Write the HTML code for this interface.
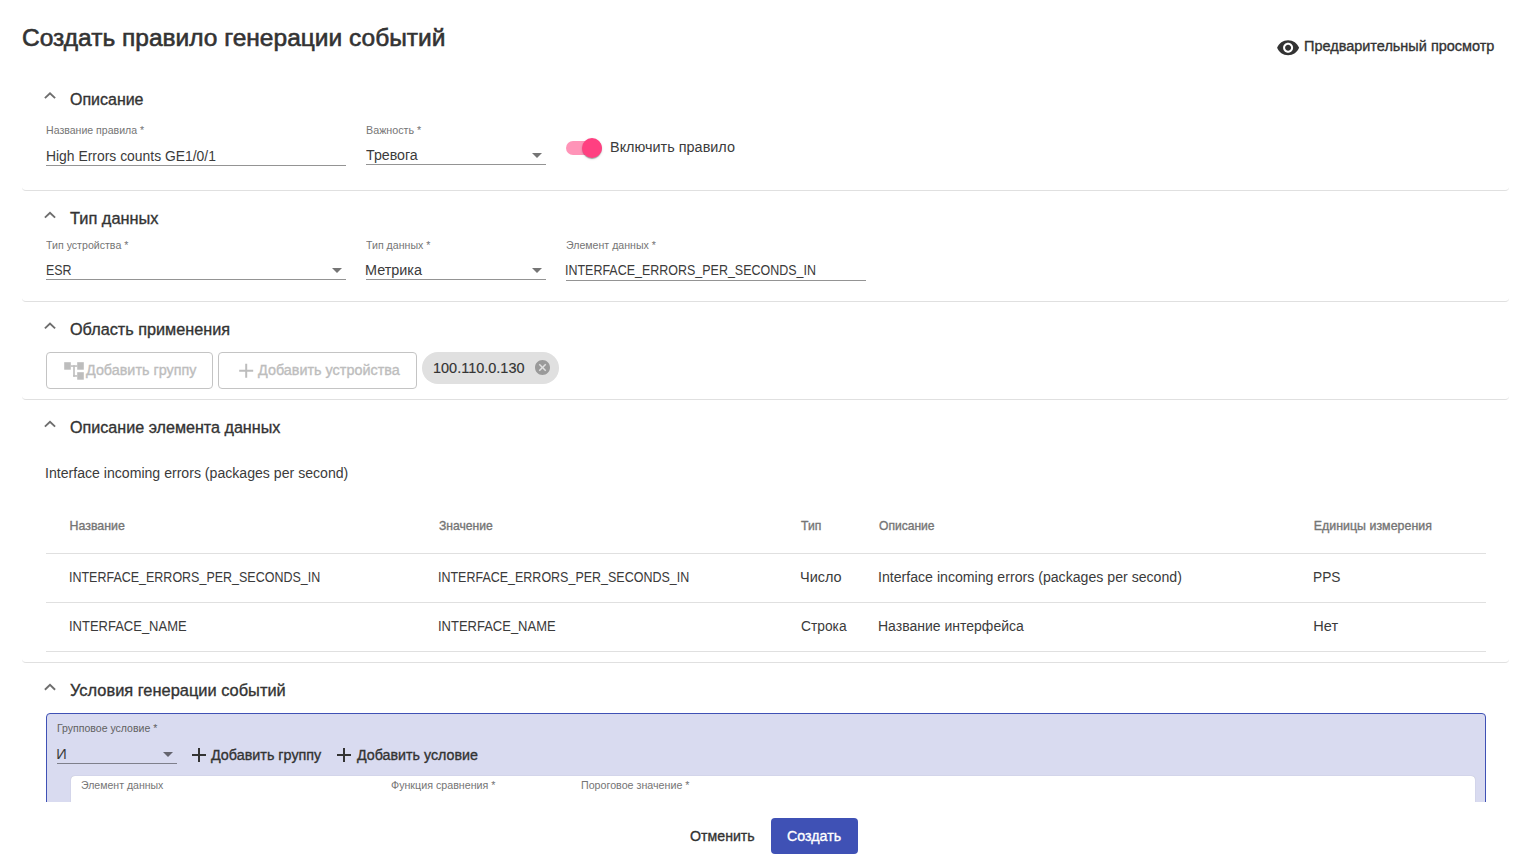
<!DOCTYPE html>
<html><head><meta charset="utf-8"><style>
html,body{margin:0;padding:0;background:#fff;width:1532px;height:868px;overflow:hidden;position:relative}
.t{position:absolute;white-space:nowrap;line-height:1;transform-origin:0 0;font-family:"Liberation Sans",sans-serif}
.r{position:absolute}
.clip{position:absolute;left:0;top:0;width:1532px;height:802px;overflow:hidden}
.ic{position:absolute;left:0;top:0}
</style></head><body>
<div class="r" style="left:22px;top:70px;width:1487px;height:121px;border-bottom:1px solid #e0e0e0;border-radius:4px;box-sizing:border-box"></div><div class="r" style="left:22px;top:198px;width:1487px;height:104px;border-bottom:1px solid #e0e0e0;border-radius:4px;box-sizing:border-box"></div><div class="r" style="left:22px;top:309px;width:1487px;height:91px;border-bottom:1px solid #e0e0e0;border-radius:4px;box-sizing:border-box"></div><div class="r" style="left:22px;top:407px;width:1487px;height:256px;border-bottom:1px solid #e0e0e0;border-radius:4px;box-sizing:border-box"></div><div class="clip"><div class="r" style="left:46px;top:713px;width:1440px;height:117px;background:#d9dbf0;border:1px solid #3f51b5;border-radius:4px;box-sizing:border-box"></div><div class="r" style="left:71px;top:776px;width:1404px;height:54px;background:#fff;border-radius:4px;box-shadow:0 0 1px rgba(0,0,0,.25)"></div></div><div class="r" style="left:46px;top:165px;width:300px;height:1px;background:rgba(0,0,0,.42)"></div><div class="r" style="left:366px;top:164px;width:180px;height:1px;background:rgba(0,0,0,.42)"></div><div class="r" style="left:46px;top:279px;width:300px;height:1px;background:rgba(0,0,0,.42)"></div><div class="r" style="left:366px;top:279px;width:180px;height:1px;background:rgba(0,0,0,.42)"></div><div class="r" style="left:566px;top:280px;width:300px;height:1px;background:rgba(0,0,0,.42)"></div><div class="r" style="left:57px;top:763px;width:120px;height:1px;background:rgba(0,0,0,.42)"></div><div class="r" style="left:46px;top:553px;width:1440px;height:1px;background:#e0e0e0"></div><div class="r" style="left:46px;top:602px;width:1440px;height:1px;background:#e0e0e0"></div><div class="r" style="left:46px;top:651px;width:1440px;height:1px;background:#e0e0e0"></div><div class="r" style="left:566px;top:141px;width:36px;height:14px;background:#ff94b8;border-radius:7px"></div><div class="r" style="left:582px;top:138px;width:20px;height:20px;background:#ff4081;border-radius:50%;box-shadow:0 2px 1px -1px rgba(0,0,0,.2),0 1px 1px 0 rgba(0,0,0,.14),0 1px 3px 0 rgba(0,0,0,.12)"></div><div class="r" style="left:46px;top:352px;width:167px;height:37px;border:1px solid #c4c4c4;border-radius:4px;box-sizing:border-box"></div><div class="r" style="left:218px;top:352px;width:199px;height:37px;border:1px solid #c4c4c4;border-radius:4px;box-sizing:border-box"></div><div class="r" style="left:422px;top:352px;width:137px;height:32px;background:#e0e0e0;border-radius:16px"></div><div class="r" style="left:771px;top:818px;width:87px;height:36px;background:#3f51b5;border-radius:4px"></div>

<svg class="ic" width="1532" height="868" viewBox="0 0 1532 868">
<polyline points="44.9,98.1 50,93.2 55.1,98.1" fill="none" stroke="#6e6e6e" stroke-width="1.9"/><polyline points="44.9,217.6 50,212.7 55.1,217.6" fill="none" stroke="#6e6e6e" stroke-width="1.9"/><polyline points="44.9,328.40000000000003 50,323.5 55.1,328.40000000000003" fill="none" stroke="#6e6e6e" stroke-width="1.9"/><polyline points="44.9,426.6 50,421.7 55.1,426.6" fill="none" stroke="#6e6e6e" stroke-width="1.9"/><polyline points="44.9,689.8000000000001 50,684.9000000000001 55.1,689.8000000000001" fill="none" stroke="#6e6e6e" stroke-width="1.9"/><polygon points="532,153 542,153 537,158" fill="rgba(0,0,0,.54)"/><polygon points="332,268 342,268 337,273" fill="rgba(0,0,0,.54)"/><polygon points="532,268 542,268 537,273" fill="rgba(0,0,0,.54)"/><polygon points="163,752 173,752 168,757" fill="rgba(0,0,0,.54)"/>
<g transform="translate(1276.1,35.8)" fill="#333"><path d="M12 4.5C7 4.5 2.730 7.610 1 12c1.730 4.390 6 7.500 11 7.500s9.270-3.110 11-7.500c-1.730-4.390-6-7.500-11-7.500zM12 17c-2.760 0-5-2.240-5-5s2.240-5 5-5 5 2.240 5 5-2.240 5-5 5zm0-8c-1.660 0-3 1.340-3 3s1.340 3 3 3 3-1.340 3-3-1.340-3-3-3z"/></g>
<g fill="#bdbdbd"><rect x="64.2" y="362.2" width="6.6" height="7.5"/><rect x="77.2" y="362.2" width="6.6" height="7.5"/><rect x="77.2" y="372.2" width="6.6" height="7.5"/><rect x="70.8" y="365.3" width="6.4" height="1.5"/><rect x="73.2" y="365.3" width="1.6" height="11.4"/><rect x="73.2" y="375.2" width="4" height="1.5"/></g>
<g transform="translate(234.2,358.8)" fill="#bdbdbd"><path d="M19 13h-6v6h-2v-6H5v-2h6V5h2v6h6v2z"/></g>
<g transform="translate(533.5,358.5) scale(0.75)" fill="#9a9a9a"><path d="M12 2C6.470 2 2 6.470 2 12s4.470 10 10 10 10-4.470 10-10S17.530 2 12 2zm5 13.590L15.590 17 12 13.410 8.410 17 7 15.590 10.590 12 7 8.410 8.410 7 12 10.590 15.590 7 17 8.410 13.410 12 17 15.590z"/></g>
<g transform="translate(187,743)" fill="#333"><path d="M19 13h-6v6h-2v-6H5v-2h6V5h2v6h6v2z"/></g>
<g transform="translate(332,743)" fill="#333"><path d="M19 13h-6v6h-2v-6H5v-2h6V5h2v6h6v2z"/></g>
</svg>
<div class="t" style="left:21.81px;top:26.00px;font-size:24.73px;color:#333;transform:scaleX(0.9919);-webkit-text-stroke:0.6px #333">Создать правило генерации событий</div><div class="t" style="left:1303.62px;top:39.00px;font-size:14.84px;color:#333;transform:scaleX(0.9762);-webkit-text-stroke:0.35px #333">Предварительный просмотр</div><div class="t" style="left:70.40px;top:92.00px;font-size:16.58px;color:#333;transform:scaleX(0.9637);-webkit-text-stroke:0.35px #333">Описание</div><div class="t" style="left:46.30px;top:125.00px;font-size:10.91px;color:#757575;transform:scaleX(0.9682)">Название правила *</div><div class="t" style="left:45.94px;top:149.00px;font-size:14.55px;color:#3b3b3b;transform:scaleX(0.9554)">High Errors counts GE1/0/1</div><div class="t" style="left:366.30px;top:125.00px;font-size:10.91px;color:#757575;transform:scaleX(0.9844)">Важность *</div><div class="t" style="left:366.30px;top:148.00px;font-size:14.55px;color:#3b3b3b;transform:scaleX(0.9761)">Тревога</div><div class="t" style="left:609.81px;top:140.00px;font-size:14.55px;color:#3b3b3b;transform:scaleX(0.9923)">Включить правило</div><div class="t" style="left:70.30px;top:211.00px;font-size:16.58px;color:#333;transform:scaleX(0.9872);-webkit-text-stroke:0.35px #333">Тип данных</div><div class="t" style="left:46.30px;top:240.00px;font-size:10.91px;color:#757575;transform:scaleX(0.9727)">Тип устройства *</div><div class="t" style="left:45.94px;top:263.00px;font-size:14.55px;color:#3b3b3b;transform:scaleX(0.8555)">ESR</div><div class="t" style="left:366.40px;top:240.00px;font-size:10.91px;color:#757575;transform:scaleX(0.9715)">Тип данных *</div><div class="t" style="left:365.41px;top:263.00px;font-size:14.55px;color:#3b3b3b;transform:scaleX(0.9904)">Метрика</div><div class="t" style="left:566.10px;top:240.00px;font-size:10.91px;color:#757575;transform:scaleX(0.9709)">Элемент данных *</div><div class="t" style="left:565.24px;top:263.00px;font-size:14.55px;color:#3b3b3b;transform:scaleX(0.8577)">INTERFACE_ERRORS_PER_SECONDS_IN</div><div class="t" style="left:70.00px;top:322.00px;font-size:16.58px;color:#333;transform:scaleX(0.9789);-webkit-text-stroke:0.35px #333">Область применения</div><div class="t" style="left:86.40px;top:363.00px;font-size:14.55px;color:#bdbdbd;transform:scaleX(0.9868);-webkit-text-stroke:0.35px #bdbdbd">Добавить группу</div><div class="t" style="left:258.40px;top:363.00px;font-size:14.55px;color:#bdbdbd;transform:scaleX(0.9890);-webkit-text-stroke:0.35px #bdbdbd">Добавить устройства</div><div class="t" style="left:433.31px;top:361.00px;font-size:14.55px;color:#333;transform:scaleX(0.9950);-webkit-text-stroke:0.15px #333">100.110.0.130</div><div class="t" style="left:70.10px;top:420.00px;font-size:16.58px;color:#333;transform:scaleX(0.9724);-webkit-text-stroke:0.35px #333">Описание элемента данных</div><div class="t" style="left:45.33px;top:466.00px;font-size:14.55px;color:#3b3b3b;transform:scaleX(0.9693)">Interface incoming errors (packages per second)</div><div class="t" style="left:69.60px;top:520.00px;font-size:12.36px;color:#757575;letter-spacing:0.006px;-webkit-text-stroke:0.35px #757575">Название</div><div class="t" style="left:439.30px;top:520.00px;font-size:12.36px;color:#757575;transform:scaleX(0.9812);-webkit-text-stroke:0.35px #757575">Значение</div><div class="t" style="left:801.30px;top:520.00px;font-size:12.36px;color:#757575;transform:scaleX(0.9844);-webkit-text-stroke:0.35px #757575">Тип</div><div class="t" style="left:879.20px;top:520.00px;font-size:12.36px;color:#757575;transform:scaleX(0.9773);-webkit-text-stroke:0.35px #757575">Описание</div><div class="t" style="left:1313.70px;top:520.00px;font-size:12.36px;color:#757575;letter-spacing:0.037px;-webkit-text-stroke:0.35px #757575">Единицы измерения</div><div class="t" style="left:69.24px;top:570.00px;font-size:14.55px;color:#3b3b3b;transform:scaleX(0.8584)">INTERFACE_ERRORS_PER_SECONDS_IN</div><div class="t" style="left:438.44px;top:570.00px;font-size:14.55px;color:#3b3b3b;transform:scaleX(0.8584)">INTERFACE_ERRORS_PER_SECONDS_IN</div><div class="t" style="left:800.30px;top:570.00px;font-size:14.55px;color:#3b3b3b;transform:scaleX(0.9964)">Число</div><div class="t" style="left:878.23px;top:570.00px;font-size:14.55px;color:#3b3b3b;transform:scaleX(0.9712)">Interface incoming errors (packages per second)</div><div class="t" style="left:1313.26px;top:570.00px;font-size:14.55px;color:#3b3b3b;transform:scaleX(0.9435)">PPS</div><div class="t" style="left:69.21px;top:619.00px;font-size:14.55px;color:#3b3b3b;transform:scaleX(0.8928)">INTERFACE_NAME</div><div class="t" style="left:438.41px;top:619.00px;font-size:14.55px;color:#3b3b3b;transform:scaleX(0.8928)">INTERFACE_NAME</div><div class="t" style="left:801.30px;top:619.00px;font-size:14.55px;color:#3b3b3b;transform:scaleX(0.9463)">Строка</div><div class="t" style="left:878.24px;top:619.00px;font-size:14.55px;color:#3b3b3b;transform:scaleX(0.9627)">Название интерфейса</div><div class="t" style="left:1313.20px;top:619.00px;font-size:14.55px;color:#3b3b3b;letter-spacing:0.094px">Нет</div><div class="t" style="left:70.10px;top:683.00px;font-size:16.58px;color:#333;transform:scaleX(0.9897);-webkit-text-stroke:0.35px #333">Условия генерации событий</div><div class="t" style="left:57.30px;top:723.00px;font-size:10.91px;color:#616161;transform:scaleX(0.9645)">Групповое условие *</div><div class="t" style="left:56.30px;top:747.00px;font-size:14.55px;color:#3b3b3b;letter-spacing:0.000px">И</div><div class="t" style="left:211.30px;top:747.00px;font-size:15.13px;color:#333;transform:scaleX(0.9482);-webkit-text-stroke:0.35px #333">Добавить группу</div><div class="t" style="left:357.00px;top:747.00px;font-size:15.13px;color:#333;transform:scaleX(0.9422);-webkit-text-stroke:0.35px #333">Добавить условие</div><div class="t" style="left:81.10px;top:780.00px;font-size:10.91px;color:#757575;transform:scaleX(0.9658)">Элемент данных</div><div class="t" style="left:391.30px;top:780.00px;font-size:10.91px;color:#757575;transform:scaleX(0.9801)">Функция сравнения *</div><div class="t" style="left:581.30px;top:780.00px;font-size:10.91px;color:#757575;transform:scaleX(0.9796)">Пороговое значение *</div><div class="t" style="left:690.40px;top:829.00px;font-size:14.84px;color:#333;transform:scaleX(0.9555);-webkit-text-stroke:0.35px #333">Отменить</div><div class="t" style="left:787.40px;top:829.00px;font-size:14.84px;color:#fff;transform:scaleX(0.9607);-webkit-text-stroke:0.35px #fff">Создать</div>
</body></html>
